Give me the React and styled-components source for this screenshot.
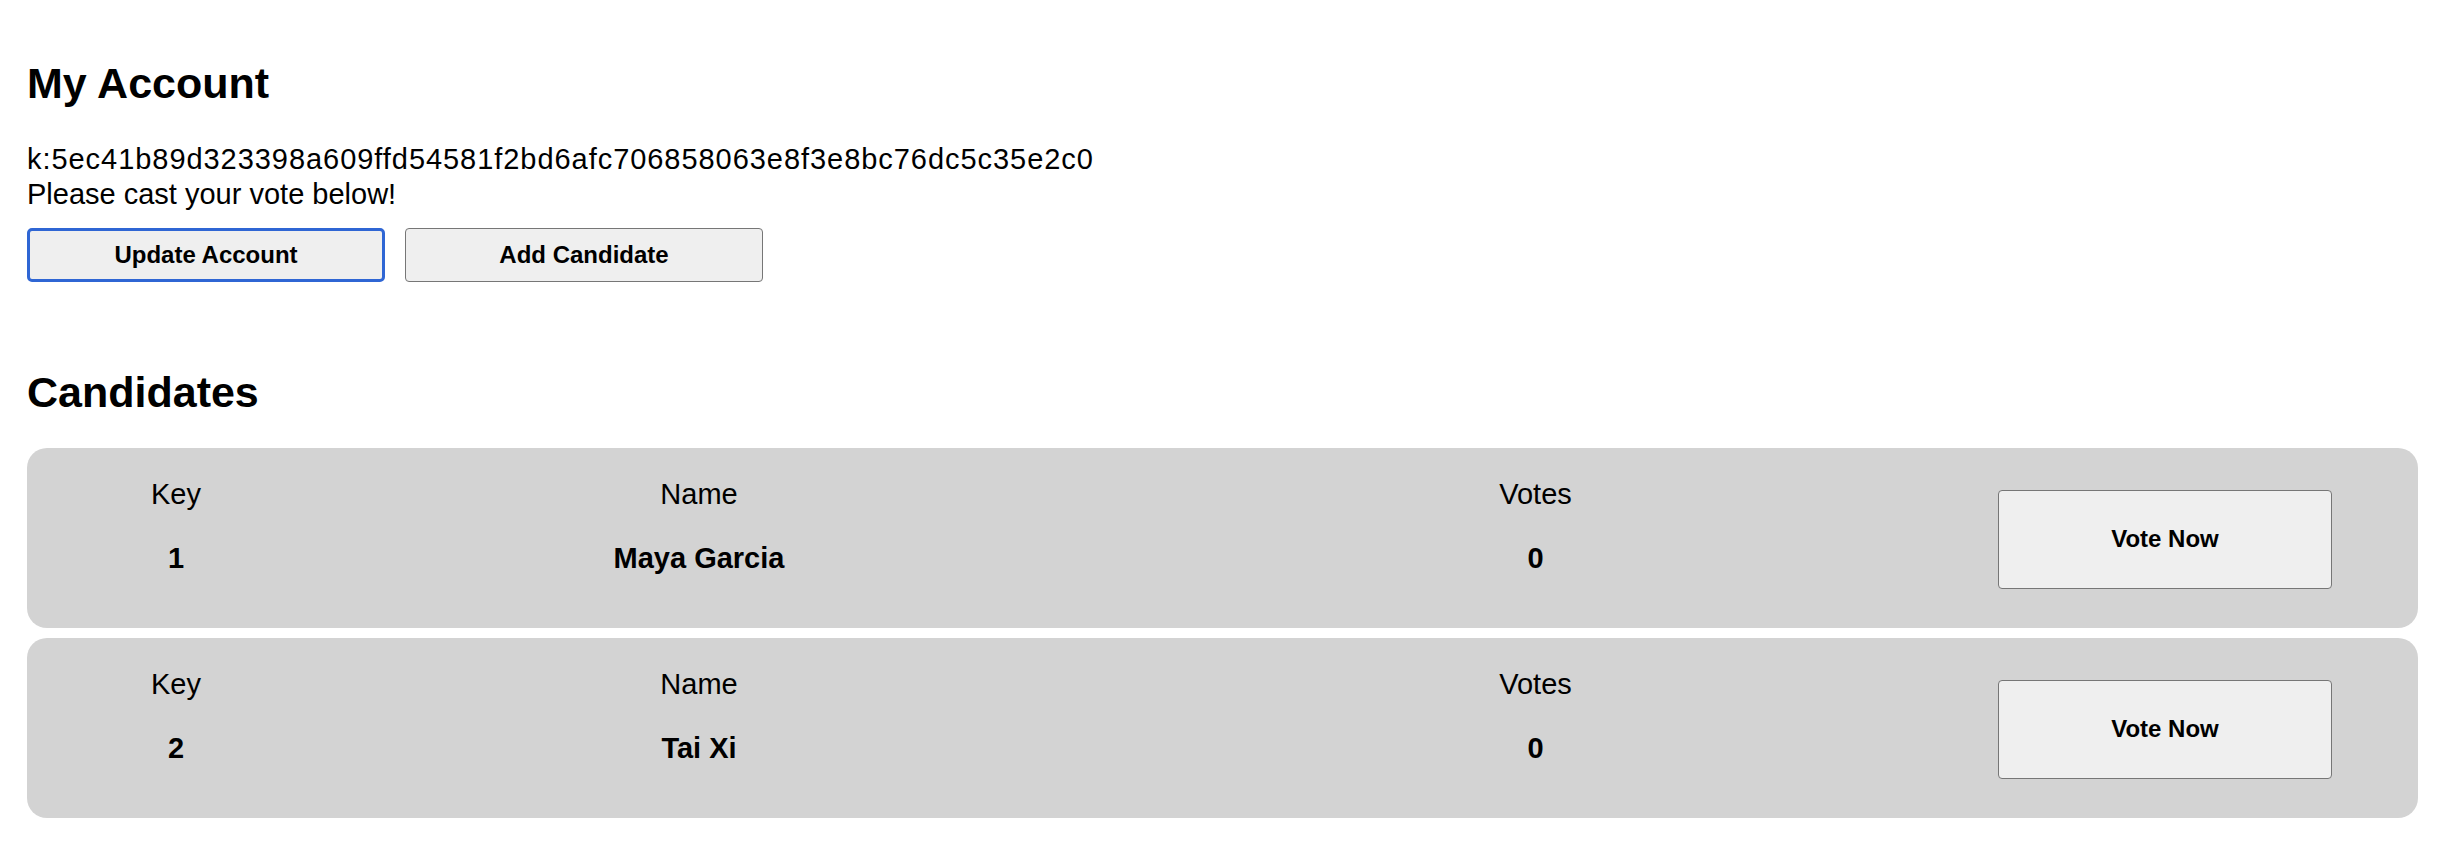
import React from "react";
import styled, { createGlobalStyle, css } from "styled-components";

const GlobalStyle = createGlobalStyle`
  html, body {
    margin: 0;
    padding: 0;
    background: #ffffff;
    color: #000000;
    font-family: "Liberation Sans", Arial, Helvetica, sans-serif;
  }
  * { box-sizing: border-box; }
`;

const Page = styled.main`
  padding: 59px 30px 38px 27px;
`;

const Title = styled.h2`
  margin: ${(p) => p.$top || 0}px 0 0;
  font-size: 43px;
  line-height: 48px;
  font-weight: 700;
`;

const AccountInfo = styled.div`
  margin-top: 35px;
  font-size: 29px;
  line-height: 35px;
`;

const Line = styled.p`
  margin: 0;
  letter-spacing: ${(p) => p.$spacing || 0}px;
`;

const ButtonRow = styled.div`
  display: flex;
  gap: 20px;
  margin-top: 16px;
`;

const ActionButton = styled.button`
  width: 358px;
  height: 54px;
  padding: 0;
  font-family: inherit;
  font-size: 24px;
  font-weight: 700;
  color: #000;
  background: #efefef;
  border: 1px solid #767676;
  border-radius: 4px;
  cursor: pointer;
  ${(p) =>
    p.$focused &&
    css`
      border: 3px solid #2f66d4;
      border-radius: 5px;
    `}
`;

const CardList = styled.div`
  display: flex;
  flex-direction: column;
  gap: 10px;
  margin-top: 32px;
`;

const Card = styled.div`
  display: grid;
  grid-template-columns: 298px 748px 1fr 334px;
  align-items: start;
  height: 180px;
  padding-right: 86px;
  background: #d3d3d3;
  border-radius: 20px;
`;

const Field = styled.div`
  display: flex;
  flex-direction: column;
  align-items: center;
  gap: 29px;
  padding-top: 29px;
  font-size: 29px;
  line-height: 35px;
`;

const Label = styled.span`
  font-weight: 400;
`;

const Value = styled.strong`
  font-weight: 700;
`;

const VoteButton = styled.button`
  align-self: center;
  width: 334px;
  height: 99px;
  padding: 0;
  margin-top: 2px;
  font-family: inherit;
  font-size: 24px;
  font-weight: 700;
  color: #000;
  background: #efefef;
  border: 1px solid #767676;
  border-radius: 4px;
  cursor: pointer;
`;

const candidates = [
  { key: 1, name: "Maya Garcia", votes: 0 },
  { key: 2, name: "Tai Xi", votes: 0 },
];

export default function App() {
  return (
    <>
      <GlobalStyle />
      <Page>
        <Title>My Account</Title>
        <AccountInfo>
          <Line $spacing={0.95}>k:5ec41b89d323398a609ffd54581f2bd6afc706858063e8f3e8bc76dc5c35e2c0</Line>
          <Line>Please cast your vote below!</Line>
        </AccountInfo>
        <ButtonRow>
          <ActionButton $focused>Update Account</ActionButton>
          <ActionButton>Add Candidate</ActionButton>
        </ButtonRow>
        <Title $top={86}>Candidates</Title>
        <CardList>
          {candidates.map((c) => (
            <Card key={c.key}>
              <Field>
                <Label>Key</Label>
                <Value>{c.key}</Value>
              </Field>
              <Field>
                <Label>Name</Label>
                <Value>{c.name}</Value>
              </Field>
              <Field>
                <Label>Votes</Label>
                <Value>{c.votes}</Value>
              </Field>
              <VoteButton>Vote Now</VoteButton>
            </Card>
          ))}
        </CardList>
      </Page>
    </>
  );
}
